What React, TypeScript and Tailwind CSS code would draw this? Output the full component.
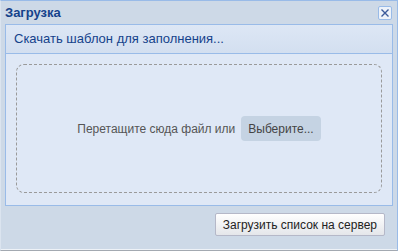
export default function App() {
  return (
    <div
      className="w-[398px] h-[251px] flex flex-col bg-[#cdd9e7] border border-[#99bbe8] border-b-[#a3a9b1] border-l-[#dbe4ef]"
      style={{ fontFamily: '"Liberation Sans", Arial, sans-serif' }}
    >
      {/* Title bar */}
      <div className="h-[23px] flex items-center justify-between pl-[4px] pr-[5px]">
        <span className="font-bold text-[13px] text-[#15428b]">Загрузка</span>
        <button className="w-[14px] h-[14px] mt-[1px] flex items-center justify-center rounded-[2px] border border-[#99bbe8] bg-[#eef3fa]">
          <svg width="10" height="10" viewBox="0 0 10 10">
            <path d="M1.5 1.5 L8.5 8.5 M8.5 1.5 L1.5 8.5" stroke="#3b5a9a" strokeWidth="1.4" />
          </svg>
        </button>
      </div>

      {/* Panel */}
      <div className="mx-[4px] h-[182px] flex flex-col border border-[#99bbe8] bg-[#dfe8f6]">
        <div className="h-[29px] flex items-center px-[8px] border-b border-[#99bbe8] bg-gradient-to-b from-[#dde7f5] to-[#d3dff0]">
          <span className="text-[13px] text-[#15428b]">Скачать шаблон для заполнения...</span>
        </div>
        <div className="flex-1 flex pt-[10px] pb-[12px] pl-[10px] pr-[10px]">
          <div className="flex-1 flex items-center justify-center gap-[6px] rounded-[8px] border border-dashed border-[#9a9a9a]">
            <span className="text-[12px] text-[#555]">Перетащите сюда файл или</span>
            <button className="h-[25px] px-[7px] rounded-[4px] bg-[#c5d3e3] text-[12px] text-[#444]">
              Выберите...
            </button>
          </div>
        </div>
      </div>

      {/* Footer */}
      <div className="flex-1 flex items-start justify-end pt-[7px] pr-[12px] border-b border-[#eef2f7]">
        <button className="h-[23px] px-[7px] rounded-[2px] border border-[#b5b8c8] bg-gradient-to-b from-[#ffffff] to-[#e4e6ea] text-[12px] text-[#222]">
          Загрузить список на сервер
        </button>
      </div>
    </div>
  )
}
